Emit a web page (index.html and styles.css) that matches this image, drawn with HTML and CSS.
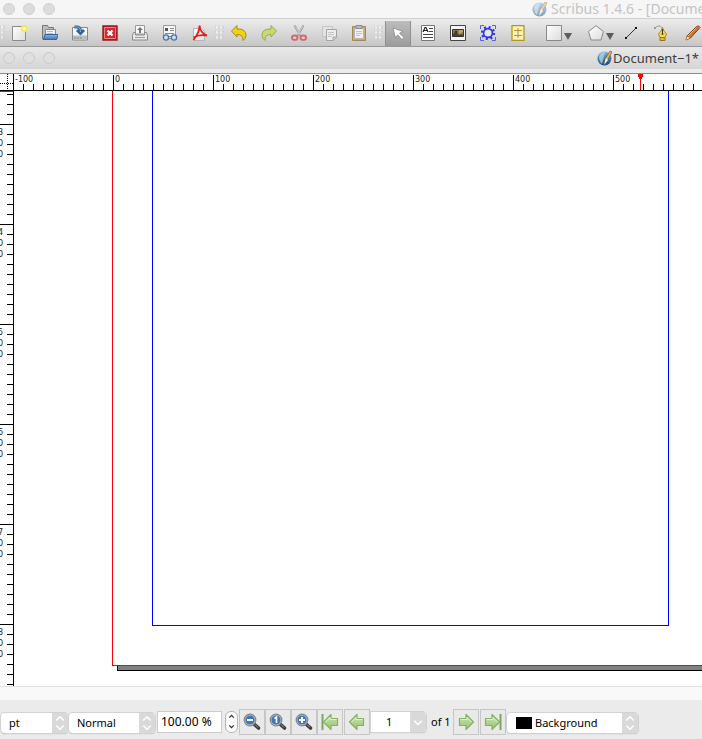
FILE: index.html
```html
<!DOCTYPE html>
<html lang="en">
<head>
<meta charset="utf-8">
<title>Scribus 1.4.6 - [Document-1*]</title>
<link rel="stylesheet" href="styles.css">
</head>
<body>
<svg class="defs" aria-hidden="true">
  <defs>
    <linearGradient id="blue" x1="0" y1="0" x2="0" y2="1"><stop offset="0" stop-color="#8fb4dc"/><stop offset="1" stop-color="#4477b8"/></linearGradient>
    <linearGradient id="paper" x1="0" y1="0" x2="1" y2="1"><stop offset="0" stop-color="#fff"/><stop offset="1" stop-color="#dcdcdc"/></linearGradient>
    <linearGradient id="green" x1="0" y1="0" x2="0" y2="1"><stop offset="0" stop-color="#cfe6b8"/><stop offset="1" stop-color="#92c46b"/></linearGradient>
    <linearGradient id="orb" x1="0" y1="0" x2="0" y2="1"><stop offset="0" stop-color="#7db9dd"/><stop offset="1" stop-color="#12477e"/></linearGradient>
    <symbol id="logo" viewBox="0 0 16 16"><circle cx="7.500" cy="8.500" r="7" fill="url(#orb)"/><path d="M2 6q2-4 6-4L6 10l-1 4q-3-2-3-8z" fill="#b8dcf0" opacity=".7"/><path d="M13 1l2 1-5 9-3 3 1-5z" fill="#e6b266" stroke="#5a4630" stroke-width=".6"/><path d="M9 8l2 2-4 5z" fill="#f6f1df"/></symbol>
    <symbol id="lens" viewBox="0 0 18 18"><path d="M11.500 11.500l4 3.500" stroke="#3c3c3c" stroke-width="3.600" stroke-linecap="round"/><path d="M12 11.500l3 3" stroke="#999" stroke-width="1"/><circle cx="7" cy="7" r="5.800" fill="#b9c6d6" stroke="#80868c" stroke-width="1.200"/><circle cx="7" cy="7" r="4.600" fill="#3f77b8"/></symbol>
    <symbol id="arrow" viewBox="0 0 18 18"><path d="M1.500 9L9 1.500V5.500h6.500v7H9v4z" fill="url(#green)" stroke="#86b163" stroke-width="1.200" stroke-linejoin="round"/><path d="M3.500 9L8 4.500V6.500h6.500" fill="none" stroke="#e1f0d2"/></symbol>
  </defs>
</svg>

<header class="titlebar">
  <div class="lights"><i></i><i></i><i></i></div>
  <h1 class="window-title"><svg class="logo" aria-hidden="true"><use href="#logo"/></svg><span>Scribus 1.4.6 - [Document-1*]</span></h1>
</header>

<nav class="toolbar" aria-label="Tools">
  <span class="grip first"></span>
  <div class="group">
    <button aria-label="New"><svg viewBox="0 0 16 16"><path d="M.5 1.500h13v14H.5z" fill="url(#paper)" stroke="#8b8b8b"/><circle cx="12.500" cy="3.500" r="3.800" fill="#f7ee3c" opacity=".85"/><circle cx="12.500" cy="3.500" r="1.600" fill="#fffde0"/></svg></button>
    <button aria-label="Open"><svg viewBox="0 0 16 16"><path d="M.5 14V.5h5l1 2h5V14z" fill="#b9bcc0" stroke="#777"/><path d="M3.500 4.500h10v6h-10z" fill="#f4f4f4" stroke="#888"/><path d="M5 6.500h6M5 8.500h6" stroke="#bbb"/><path d="M1.500 14.500L3 9.500h13.500l-2 5z" fill="url(#blue)" stroke="#31619e"/></svg></button>
    <button aria-label="Save"><svg viewBox="0 0 16 16"><path d="M.5 2.500h15v12.500H.5z" fill="#f4f4f4" stroke="#888"/><path d="M1 10.500h14V15H1z" fill="#bdbdbd"/><path d="M2 13h2m1 0h2m1 0h2" stroke="#888"/><path d="M2.500 2h3q3 .5 3 4.500M5 5l3.500 3.500L12 5" fill="none" stroke="#2f6594" stroke-width="3"/><path d="M2.500 2h3q3 .5 3 5" fill="none" stroke="#72a8d0" stroke-width="1.200"/></svg></button>
    <button aria-label="Close"><svg viewBox="0 0 16 16"><path d="M1 1h14v14H1z" fill="#d8252c" stroke="#96181d" stroke-width="1.400"/><path d="M2.500 2.500h11v11h-11z" fill="none" stroke="#ee8487"/><path d="M5.500 5.500l5 5M10.500 5.500l-5 5" stroke="#fff" stroke-width="2.400"/></svg></button>
    <button aria-label="Print"><svg viewBox="0 0 16 16"><path d="M3.500 9V.5h9V9z" fill="#f8f8f8" stroke="#999"/><path d="M8 2l3 3H9v3H7V5H5z" fill="#777"/><path d="M1.500 7.500h2V10h9V7.500h2l1 3v4.500H.5v-4.500z" fill="#eaeaea" stroke="#888"/><path d="M3 12.500h10" stroke="#999"/></svg></button>
    <button aria-label="Preflight"><svg viewBox="0 0 16 16"><path d="M1.500.5h12v13h-12z" fill="#f6f6f6" stroke="#999"/><path d="M3 3h3v3H3z" fill="#555"/><path d="M8 3.500h4M8 5.500h4M3 8.500h9" stroke="#888"/><circle cx="4" cy="12.500" r="2.600" fill="#cfe0f2" stroke="#4674ab" stroke-width="1.300"/><circle cx="12" cy="12.500" r="2.600" fill="#cfe0f2" stroke="#4674ab" stroke-width="1.300"/><path d="M6.500 12q1.500-1 3 0" fill="none" stroke="#4674ab"/></svg></button>
    <button aria-label="Export PDF"><svg viewBox="0 0 16 16"><path d="M1.500 3.500h8l3 3v9h-11z" fill="url(#paper)" stroke="#b5b5b5"/><path d="M1.500 15C4.500 11 8 5 7.500.5C8 6 11 9 15 10.500M1.500 12.500Q7 9 15 10.500" fill="none" stroke="#e0201b" stroke-width="1.800"/></svg></button>
  </div>
  <span class="grip"></span>
  <div class="group">
    <button aria-label="Undo"><svg viewBox="0 0 16 16"><path d="M.5 6L6 .5V4q9-.5 9 6.500 0 3-3 5 .5-6-6-6V12z" fill="#f0d21c" stroke="#a68c10" stroke-linejoin="round"/></svg></button>
    <button aria-label="Redo"><svg viewBox="0 0 16 16"><path d="M15.500 6L10 .5V4Q1 3.500 1 10.500q0 3 3 5-.5-6 6-6V12z" fill="#c8d96e" stroke="#98ab50" stroke-linejoin="round"/></svg></button>
    <button aria-label="Cut"><svg viewBox="0 0 16 16"><path d="M3.500.5l6.500 11M12.500.5L6 11.500" stroke="#999" stroke-width="2"/><path d="M4 1l5.500 9M12 1L6.500 10" stroke="#ddd" stroke-width=".8"/><ellipse cx="3.700" cy="12.700" rx="2.800" ry="2.200" fill="none" stroke="#d3686b" stroke-width="1.900"/><ellipse cx="12.300" cy="12.700" rx="2.800" ry="2.200" fill="none" stroke="#d3686b" stroke-width="1.900"/></svg></button>
    <button aria-label="Copy"><svg viewBox="0 0 16 16"><path d="M1.500 1.500h10v10h-10z" fill="#e4e4e4" stroke="#c4c4c4"/><path d="M5.500 4.500h10v8l-3 3h-7z" fill="#eee" stroke="#a4a4a4"/><path d="M7 7.500h6M7 9.500h6M7 11.500h4" stroke="#c4c4c4"/><path d="M12 15v-3h3" fill="#ccc" stroke="#a4a4a4"/></svg></button>
    <button aria-label="Paste"><svg viewBox="0 0 16 16"><path d="M1.500 1.500h13v14h-13z" fill="#c9a877" stroke="#a5875c"/><path d="M3.500 3.500h9v10h-9z" fill="#f0f0f0" stroke="#b5b5b5"/><path d="M5 6.500h6M5 8.500h6M5 10.500h4" stroke="#c4c4c4"/><path d="M5 .500h6v3H5z" fill="#bbb" stroke="#8b8b8b"/></svg></button>
  </div>
  <span class="grip"></span>
  <button class="selected" aria-label="Select item" aria-pressed="true"><svg viewBox="0 0 16 16"><path d="M3 2l2.500 10 2.200-3.200L12 13.500l2-2-4.500-4.200L13 5.500z" fill="#fff" stroke="#888" stroke-width=".8"/></svg></button>
  <div class="group">
    <button aria-label="Insert text frame"><svg viewBox="0 0 16 16"><path d="M1.500.5h13v15h-13z" fill="#fff" stroke="#777"/><path d="M3 7L5 2.500h1L8 7M4 5.500h3" fill="none" stroke="#222" stroke-width="1.200"/><path d="M9 3.500h4M9 6.500h4M3 9.500h10M3 12.500h10" stroke="#444"/></svg></button>
    <button aria-label="Insert image frame"><svg viewBox="0 0 16 16"><path d="M.5.500h15v15H.5z" fill="#f4f4f4" stroke="#444"/><path d="M2.500 4.500h11v7h-11z" fill="#8d8058" stroke="#333"/><path d="M3 9l3-2 3 3 2-1 2 1v1H3z" fill="#484030"/><circle cx="6" cy="7" r="1.500" fill="#40382a"/><path d="M9 5h4v2L9 9z" fill="#c0a568"/></svg></button>
    <button aria-label="Insert render frame"><svg viewBox="0 0 16 16"><path d="M.5 4V.5H4M12 .5h3.500V4M15.500 12v3.500H12M4 15.500H.5V12" fill="none" stroke="#5361e8"/><circle cx="8" cy="8" r="6" fill="none" stroke="#2630ed" stroke-width="2.200" stroke-dasharray="2 2.710"/><circle cx="8" cy="8" r="4.400" fill="#e5e6ef" stroke="#2630ed" stroke-width="1.600"/></svg></button>
    <button aria-label="Insert table"><svg viewBox="0 0 16 16"><path d="M2 .500h12v15H2z" fill="#fdf3b5" stroke="#b3952c" stroke-width="1.300"/><path d="M4 5.500h8M4 10.500h8M8 3v10" stroke="#b3952c"/></svg></button>
  </div>
  <div class="group shapes">
    <button aria-label="Insert shape"><svg viewBox="0 0 16 16"><path d="M.5.500h15v15H.5z" fill="url(#paper)" stroke="#888"/></svg><i class="caret"></i></button>
    <button class="polygon" aria-label="Insert polygon"><svg viewBox="0 0 16 16"><path d="M8 .7L15.500 6.500l-2.500 8.500H3L.5 6.500z" fill="url(#paper)" stroke="#888"/></svg><i class="caret"></i></button>
  </div>
  <div class="group drawing">
    <button aria-label="Insert line"><svg viewBox="0 0 16 16"><path d="M3 13L13 3" stroke="#333"/><path d="M2 12h2v2H2zM12 2h2v2h-2z" fill="#111"/></svg></button>
    <button aria-label="Insert Bezier curve"><svg viewBox="0 0 16 16"><path d="M0 3.500Q5-1 8 2.500" fill="none" stroke="#999"/><path d="M0 2h2v2H0z" fill="#999"/><path d="M8.500 2.500q1 4 4 6.500l-1.500 3.500H6L4.500 9q3-2.500 4-6.500z" fill="#f5dc60" stroke="#a2831c"/><path d="M8.500 4v5" stroke="#493b10"/><circle cx="8.500" cy="9" r="1" fill="#493b10"/><path d="M6 12.500h5V15.500H6z" fill="#e2b933" stroke="#94751c"/></svg></button>
    <button aria-label="Insert freehand line"><svg viewBox="0 0 16 16"><path d="M2 11L11.500 1.500q2-1.500 3.500 1L5.500 13 1 15z" fill="#c67731" stroke="#7c431b"/><path d="M3 11l9-9" stroke="#edb678"/><path d="M2 11.500L5 13l-4 2z" fill="#f1d8aa"/><path d="M12 1.500l3 2" stroke="#d85c53" stroke-width="2.500"/></svg></button>
  </div>
</nav>

<main class="document">
  <header class="doc-titlebar">
    <div class="lights"><i></i><i></i><i></i></div>
    <h2 class="doc-title"><svg class="logo" aria-hidden="true"><use href="#logo"/></svg><span>Document−1*</span></h2>
  </header>
  <div class="ruler-row">
    <div class="corner"></div>
    <div class="ruler-x">
      <span>-100</span><span>0</span><span>100</span><span>200</span><span>300</span><span>400</span><span class="marked">500<svg class="marker" viewBox="0 0 5 16"><path d="M0 0h5v3H4v2H3v11H2V5H1V3H0z" fill="#f00"/></svg></span>
    </div>
  </div>
  <div class="workspace">
    <div class="ruler-y">
      <span></span>
      <span><b>3</b><b>0</b><b>0</b></span>
      <span><b>4</b><b>0</b><b>0</b></span>
      <span><b>5</b><b>0</b><b>0</b></span>
      <span><b>6</b><b>0</b><b>0</b></span>
      <span><b>7</b><b>0</b><b>0</b></span>
      <span><b>8</b><b>0</b><b>0</b></span>
    </div>
    <div class="canvas"><div class="page"><div class="margins"></div></div></div>
  </div>
</main>

<footer class="statusbar">
  <label class="combo unit"><select aria-label="Unit"><option>pt</option><option>mm</option></select><svg viewBox="0 0 12 16"><path d="M3 6l3-3 3 3M3 10l3 3 3-3"/></svg></label>
  <label class="combo quality"><select aria-label="Preview quality"><option>Normal</option><option>High</option></select><svg viewBox="0 0 12 16"><path d="M3 6l3-3 3 3M3 10l3 3 3-3"/></svg></label>
  <input class="zoom" aria-label="Zoom" value="100.00 %">
  <div class="spin">
    <button aria-label="Zoom up"><svg viewBox="0 0 8 6"><path d="M2 4l2-2 2 2"/></svg></button>
    <button aria-label="Zoom down"><svg viewBox="0 0 8 6"><path d="M2 2l2 2 2-2"/></svg></button>
  </div>
  <div class="zoom-buttons">
    <button aria-label="Zoom out"><svg viewBox="0 0 18 18"><use href="#lens"/><path d="M4 7h6" stroke="#fff" stroke-width="2"/></svg></button>
    <button aria-label="Zoom to 100%"><svg viewBox="0 0 18 18"><use href="#lens"/><path d="M5.500 5.500L7.500 4v6" fill="none" stroke="#fff" stroke-width="1.600"/></svg></button>
    <button aria-label="Zoom in"><svg viewBox="0 0 18 18"><use href="#lens"/><path d="M4 7h6M7 4v6" stroke="#fff" stroke-width="2"/></svg></button>
  </div>
  <div class="page-buttons">
    <button aria-label="First page"><svg viewBox="0 0 18 18"><path d="M1.500 1v16" stroke="#7da75c" stroke-width="2"/><use href="#arrow" x="1"/></svg></button>
    <button aria-label="Previous page"><svg viewBox="0 0 18 18"><use href="#arrow"/></svg></button>
  </div>
  <label class="combo number"><select aria-label="Page"><option>1</option></select><svg viewBox="0 0 12 16"><path d="M3 7l3 3 3-3"/></svg></label>
  <span class="count">of 1</span>
  <div class="page-buttons">
    <button aria-label="Next page"><svg class="flip" viewBox="0 0 18 18"><use href="#arrow"/></svg></button>
    <button aria-label="Last page"><svg class="flip" viewBox="0 0 18 18"><path d="M1.500 1v16" stroke="#7da75c" stroke-width="2"/><use href="#arrow" x="1"/></svg></button>
  </div>
  <label class="combo layer"><i class="swatch"></i><select aria-label="Layer"><option>Background</option></select><svg viewBox="0 0 12 16"><path d="M3 6l3-3 3 3M3 10l3 3 3-3"/></svg></label>
</footer>
</body>
</html>
```

FILE: styles.css
```css
* { box-sizing: border-box; }

body {
  margin: 0;
  min-height: 100vh;
  display: flex;
  flex-direction: column;
  overflow: hidden;
  background: #fff;
  color: #000;
  font: 11px/16px "Noto Sans", "Open Sans", sans-serif;
}

button { border: 0; padding: 0; background: none; font: inherit; }
h1, h2 { margin: 0; font-weight: 400; }
.defs { position: absolute; width: 0; height: 0; }
svg { flex: none; }

/* Window and document title bars */
.titlebar, .doc-titlebar { display: flex; flex: none; align-items: center; overflow: hidden; }
.titlebar { height: 19px; border-bottom: 1px solid #cfcfcf; background: #f6f6f6; }
.doc-titlebar {
  height: 27px;
  padding-bottom: 4px;
  border-bottom: 1px solid #8a8a8a;
  background: linear-gradient(#e9e9e9, #d5d5d5 22px, #ececec 22px);
}
.lights { display: flex; flex: none; gap: 8px; padding-left: 3px; }
.lights i { width: 12px; height: 12px; border: 1px solid #d0d0d0; border-radius: 50%; background: #dcdcdc; }
.doc-titlebar .lights i { border-color: #cacaca; background: #dfdfdf; }
.logo { width: 16px; height: 16px; }
.window-title, .doc-title { display: flex; align-items: center; white-space: nowrap; }
.window-title { margin-left: auto; margin-right: -42px; gap: 3px; color: #c4c4c4; font-size: 14px; }
.window-title .logo { opacity: .5; }
.doc-title { margin-left: auto; padding-right: 3px; color: #3c3c3c; font-size: 13px; }

/* Toolbar */
.toolbar {
  display: flex;
  flex: none;
  height: 28px;
  overflow: hidden;
  border-bottom: 1px solid #979797;
  background: linear-gradient(#ececec, #c6c6c6);
}
.group { display: flex; }
.toolbar button { display: flex; flex: none; width: 30px; align-items: center; justify-content: center; }
.toolbar svg { width: 16px; height: 16px; }
.grip { flex: none; width: 9px; margin: 6px 0; background: radial-gradient(circle, #fafafa 1px, #b8b8b8 2px, transparent 2px) 0 0 / 4px 5px; opacity: .6; }
.grip.first { width: 5px; }
.toolbar .selected { width: 26px; margin: 2px 2px 0; background: linear-gradient(#bdbdbd, #9c9c9c); border: solid #8f8f8f; border-width: 0 1px; }
.toolbar .shapes { padding-left: 11px; }
.toolbar .shapes button { width: 42px; gap: 2px; justify-content: flex-start; padding-left: 2px; }
.toolbar .shapes .polygon { width: 30px; }
.toolbar .drawing { gap: 1px; }
.caret { margin-top: 8px; border: 4px solid transparent; border-top: 7px solid #5c5c5c; border-bottom: 0; }

/* Rulers and page */
.document { display: flex; flex: 1; flex-direction: column; min-height: 0; }
.ruler-row { display: flex; flex: none; height: 17px; border-bottom: 1px solid #000; }
.corner {
  flex: none;
  width: 14px;
  border-right: 1px solid #000;
  background:
    repeating-linear-gradient(90deg, #000 0 1px, transparent 1px 2px) 0 9px / 100% 1px no-repeat,
    repeating-linear-gradient(#000 0 1px, transparent 1px 2px) 7px 0 / 1px 100% no-repeat;
}
.ruler-x {
  display: flex;
  flex: 1;
  overflow: hidden;
  background: repeating-linear-gradient(90deg, transparent 0 9px, #000 9px 10px) 0 100% / 100% 6px no-repeat;
  color: #222;
  font: 8px/10px "DejaVu Sans", sans-serif;
}
.ruler-x span { flex: none; width: 100px; margin-top: 1px; border-left: 1px solid #000; padding-left: 1px; }
.ruler-x span:first-child { width: 99px; border-left: 0; }
.marked { position: relative; }
.marker { position: absolute; top: -1px; left: 24px; width: 5px; height: 16px; }
.workspace { display: flex; flex: 1; min-height: 0; overflow: hidden; }
.ruler-y {
  display: flex;
  flex: none;
  flex-direction: column;
  width: 14px;
  height: 595px;
  overflow: hidden;
  border-top: 1px solid #f00;
  border-right: 1px solid #000;
  background: repeating-linear-gradient(transparent 0 2px, #000 2px 3px, transparent 3px 10px) 100% 0 / 6px 100% no-repeat;
  color: #222;
  font: 8px/11px "DejaVu Sans", sans-serif;
}
.ruler-y span { display: flex; flex: none; flex-direction: column; height: 100px; padding-top: 2px; border-top: 1px solid #000; }
.ruler-y span:first-child { height: 32px; border-top: 0; }
.ruler-y b { margin-left: -2px; font-weight: 400; }
.canvas { display: flex; flex: 1; min-width: 0; padding: 0 0 20px 98px; overflow: hidden; }
.page {
  display: flex;
  flex: none;
  width: 597px;
  padding: 0 39px 39px;
  border: 1px solid #f00;
  border-top: 0;
  background: #fff;
  box-shadow: 6px 4px 0 #808080, 5px 5px 0 #000;
}
.margins { flex: 1; border: 1px solid #00f; border-top: 0; }

/* Status bar */
.statusbar {
  display: flex;
  flex: none;
  align-items: center;
  height: 53px;
  padding-top: 17px;
  border-top: 1px solid #e0e0e0;
  background: linear-gradient(#f9f9f9 13px, #ebebeb 13px);
}
.statusbar svg { width: 18px; height: 18px; }
.combo {
  display: flex;
  flex: none;
  align-items: center;
  height: 20px;
  margin: 2px 1px 0 0;
  border-radius: 4px;
  background: #fff;
  box-shadow: 0 0 0 1px #d2d2d2, 0 1px 1px #999;
  overflow: hidden;
}
.combo select {
  flex: 1;
  min-width: 0;
  height: 20px;
  padding: 0 0 0 8px;
  appearance: none;
  border: 0;
  outline: 0;
  background: none;
  color: #000;
  font: inherit;
}
.statusbar .combo svg { width: 16px; height: 20px; background: #d9d9d9; fill: none; stroke: #fff; stroke-width: 1.200; }
.unit { width: 67px; margin-left: 1px; }
.quality { width: 86px; }
.zoom { flex: none; width: 65px; height: 22px; margin-left: 1px; padding: 0 3px; border: 1px solid #ccc; background: #fff; color: #000; font: inherit; font-size: 12px; }
.spin { display: flex; flex: none; flex-direction: column; width: 13px; height: 22px; margin: 0 1px 0 3px; border: 1px solid #b5b5b5; border-radius: 6px; background: #fff; }
.spin button { display: flex; flex: 1; align-items: center; justify-content: center; }
.statusbar .spin svg { width: 9px; height: 7px; fill: none; stroke: #333; stroke-width: 1.200; }
.zoom-buttons, .page-buttons { display: flex; flex: none; }
.page-buttons { gap: 1px; }
.zoom-buttons button, .page-buttons button { display: flex; width: 26px; height: 26px; align-items: center; justify-content: center; border: 1px solid #c6c6c6; background: #e9e9e9; }
.flip { transform: scaleX(-1); }
.number { width: 55px; margin: 0 5px 0 1px; border-radius: 0 4px 4px 0; }
.combo.number select { padding-left: 15px; }
.count { flex: none; width: 22px; white-space: nowrap; }
.layer { width: 131px; margin-left: 1px; }
.swatch { flex: none; width: 16px; height: 12px; margin-left: 9px; background: #000; }
.combo.layer select { padding-left: 3px; }
```
